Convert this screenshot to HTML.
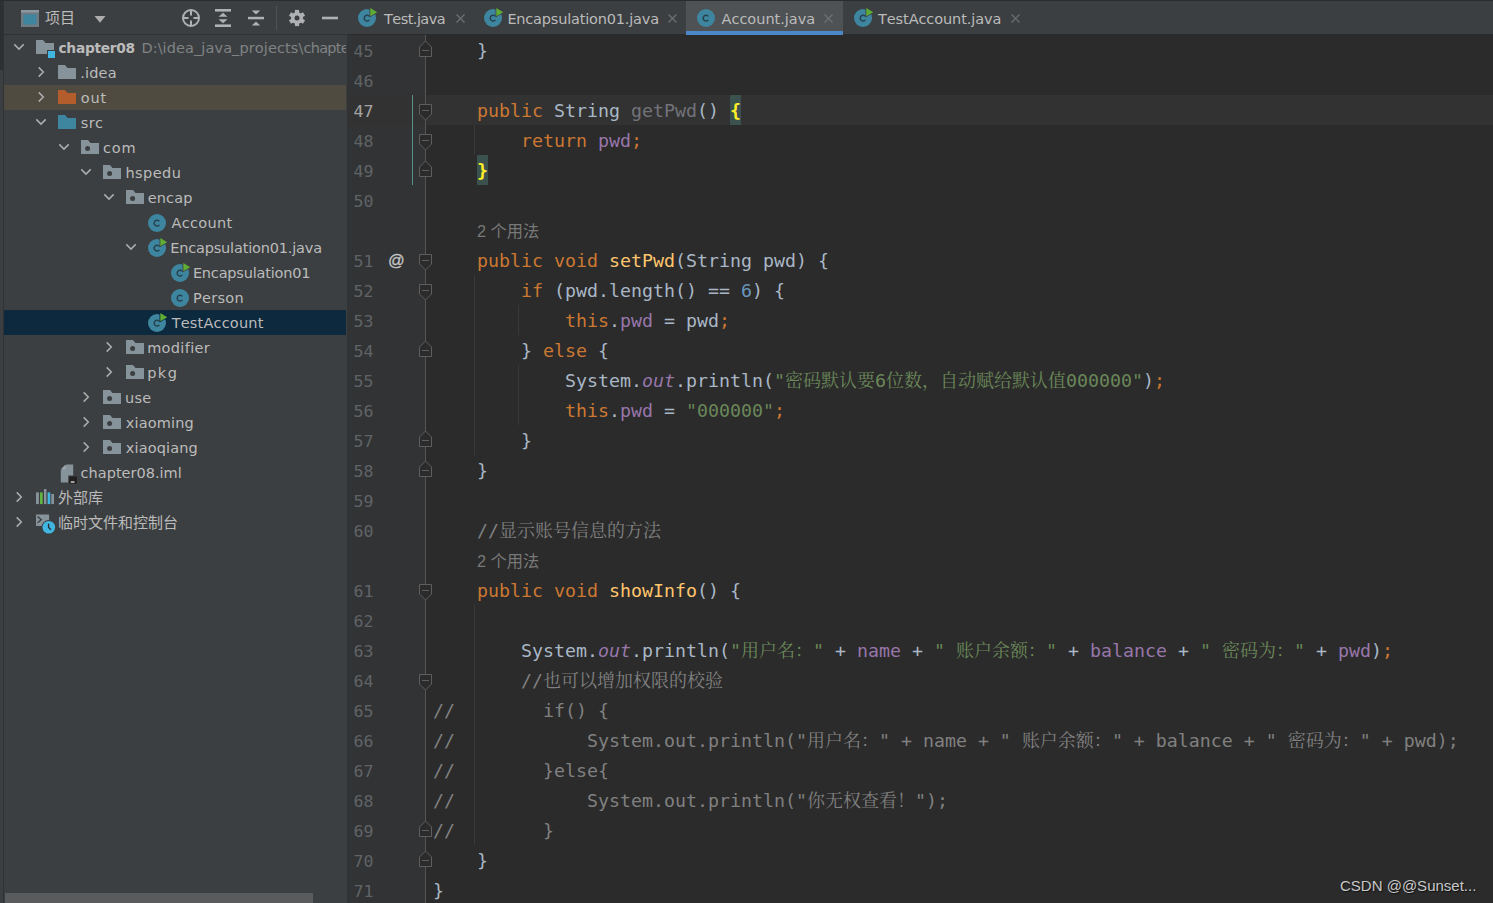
<!DOCTYPE html><html lang="zh"><head><meta charset="utf-8"><title>Account.java</title><style>
*{box-sizing:border-box}
html,body{margin:0;padding:0}
body{width:1493px;height:903px;overflow:hidden;background:#2b2b2b;position:relative;font-family:"Liberation Sans","Noto Sans CJK SC",sans-serif;font-size:15px;color:#bbbbbb}
.abs{position:absolute}
#strip{left:0;top:0;width:3px;height:903px;background:#3c3f41}
#strip i{position:absolute;left:0;top:0;width:4px;height:70px;background:#2d2f30}
#stripline{left:3px;top:0;width:1px;height:903px;background:#2f3132}
#panel{left:4px;top:0;width:343px;height:903px;background:#3c3f41;overflow:hidden}
#topline{left:0;top:0;width:1493px;height:1px;background:#2b2b2b}
#hdrline{left:4px;top:34px;width:342px;height:1px;background:#2f3132}
.row{position:absolute;left:5px;width:342px;height:25px}
.row .t{font-kerning:none;position:absolute;top:1px;line-height:25px;white-space:nowrap;font-family:"DejaVu Sans","Noto Sans CJK SC",sans-serif;font-size:14.5px;letter-spacing:.55px;color:#bbbbbb}
.row svg{position:absolute}
.gray{color:#7f8385}
#tabs{left:347px;top:1px;width:1146px;height:33px;background:#3c3f41}
.tab{position:absolute;top:1px;height:33px}
.tab .t{position:absolute;top:0;line-height:34px;white-space:nowrap;font-size:15px;letter-spacing:.55px;color:#bbbbbb}
.tab svg{position:absolute}
#gutter{left:347px;top:35px;width:79px;height:868px;background:#313335}
#foldline{left:425px;top:35px;width:1px;height:868px;background:#555555}
.ln{position:absolute;left:353.5px;height:30px;line-height:33.5px;font-family:"DejaVu Sans Mono","Liberation Mono","Noto Serif CJK SC",monospace;font-size:16.6px;color:#606366;white-space:pre}
.cl{position:absolute;left:433px;height:30px;line-height:32px;font-family:"DejaVu Sans Mono","Liberation Mono","Noto Serif CJK SC",monospace;font-size:18.27px;color:#a9b7c6;white-space:pre}
.cl .z,.z{font-family:"Noto Serif CJK SC",serif;font-size:18px;line-height:0}
.k{color:#cc7832}.m{color:#ffc66d}.f{color:#9876aa}.n{color:#6897bb}.s{color:#6a8759}.c{color:#808080}.u{color:#72737a}
.sf{color:#9876aa;font-style:italic}
.br{color:#ffef28;background:#3b514d;font-weight:bold;display:inline-block;height:30px;line-height:32px;vertical-align:top}
.hint{position:absolute;left:477px;height:30px;line-height:30px;font-size:16.25px;color:#787878;white-space:pre;letter-spacing:0}
.ig{position:absolute;width:1px;background:#393939}
</style></head><body>
<div class="abs" id="tabs"></div>
<div class="abs" id="gutter"></div>
<div class="abs" style="left:347px;top:95px;width:1146px;height:30px;background:#323232"></div>
<div class="abs" id="foldline"></div>
<div class="abs" style="left:412px;top:95px;width:1.3px;height:90px;background:#5a8f85"></div>
<div class="abs" id="strip"><i></i></div><div class="abs" id="stripline"></div>
<div class="abs" id="panel"></div>
<div class="abs" id="hdrline"></div>
<svg class="abs" style="left:0;top:0" width="347" height="35" viewBox="0 0 347 35">
<rect x="21" y="10" width="18" height="17" fill="#6e7b83"/><rect x="21" y="10" width="18" height="2.5" fill="#8c98a0"/>
<rect x="23.5" y="14.5" width="13" height="10" fill="#3e86a0"/>
<path d="M94.5 16 H105.5 L100 22.7 Z" fill="#adadad"/>
<g fill="none" stroke="#afb1b3" stroke-width="2">
<circle cx="191" cy="18" r="8"/>
<path d="M191 10 V15.5 M191 20.5 V26 M183 18 H188.5 M193.5 18 H199"/>
</g>
<g fill="#afb1b3">
<rect x="215" y="9" width="16" height="2.6"/><rect x="215" y="24.4" width="16" height="2.6"/>
<path d="M223 12.8 L227.5 16.8 H218.5 Z"/><path d="M223 23.2 L227.5 19.2 H218.5 Z"/>
<rect x="248" y="16.8" width="16" height="2.5"/>
<path d="M256 14.6 L260.2 10.4 H251.8 Z"/><path d="M256 21.4 L260.2 25.6 H251.8 Z"/>
<rect x="322" y="16.7" width="16" height="2.6"/>
</g>
<rect x="276" y="6" width="1" height="24" fill="#515151"/>
<g transform="translate(297 18)">
<g fill="#afb1b3">
<circle r="6"/>
<rect x="-2.1" y="-8.1" width="4.2" height="4" transform="rotate(0)"/>
<rect x="-2.1" y="-8.1" width="4.2" height="4" transform="rotate(60)"/>
<rect x="-2.1" y="-8.1" width="4.2" height="4" transform="rotate(120)"/>
<rect x="-2.1" y="-8.1" width="4.2" height="4" transform="rotate(180)"/>
<rect x="-2.1" y="-8.1" width="4.2" height="4" transform="rotate(240)"/>
<rect x="-2.1" y="-8.1" width="4.2" height="4" transform="rotate(300)"/>
</g>
<circle r="2.5" fill="#3c3f41"/>
</g>
</svg>
<div class="abs" style="left:45px;top:1px;line-height:34px;font-size:15px;color:#bbbbbb;letter-spacing:0">项目</div>
<svg class="abs" style="left:11.9px;top:42.25px" width="14" height="10" viewBox="0 0 14 10"><path d="M2.3 2.4 L7 7.1 L11.7 2.4" fill="none" stroke="#adadad" stroke-width="1.5"/></svg>
<svg class="abs" style="left:36px;top:39.5px" width="18" height="14" viewBox="0 0 18 14"><path d="M0 0 H7 L9.5 3 H18 V14 H0 Z" fill="#87939a"/></svg>
<div class="abs" style="left:46.5px;top:49.5px;width:9px;height:9px;background:#3c3f41"></div>
<div class="abs" style="left:47.5px;top:50.5px;width:7.5px;height:7.5px;background:#40b6e0"></div>
<div class="row" style="top:35px;left:0;width:346px;overflow:hidden"><span class="t" style="left:58.5px;letter-spacing:0px"><b style="letter-spacing:-.28px;font-size:13.75px">chapter08</b><span class="gray" style="position:absolute;left:82.9px;top:0;letter-spacing:.094px">D:\idea_java_projects\<span style="letter-spacing:-.7px">chapter08</span></span></span></div>
<svg class="abs" style="left:36.3px;top:65px" width="10" height="14" viewBox="0 0 10 14"><path d="M2.7 2.4 L7.3 7 L2.7 11.6" fill="none" stroke="#adadad" stroke-width="1.5"/></svg>
<svg class="abs" style="left:58px;top:65px" width="18" height="14" viewBox="0 0 18 14"><path d="M0 0 H7 L9.5 3 H18 V14 H0 Z" fill="#87939a"/></svg>
<div class="row" style="top:60px;left:0;width:346px;overflow:hidden"><span class="t" style="left:80.15px;letter-spacing:0.205px">.idea</span></div>
<div class="abs" style="left:4px;top:85px;width:342px;height:25px;background:#4f4b41"></div>
<svg class="abs" style="left:36.3px;top:90px" width="10" height="14" viewBox="0 0 10 14"><path d="M2.7 2.4 L7.3 7 L2.7 11.6" fill="none" stroke="#adadad" stroke-width="1.5"/></svg>
<svg class="abs" style="left:58px;top:90px" width="18" height="14" viewBox="0 0 18 14"><path d="M0 0 H7 L9.5 3 H18 V14 H0 Z" fill="#b35c2c"/></svg>
<div class="row" style="top:85px;left:0;width:346px;overflow:hidden"><span class="t" style="left:80.7px;letter-spacing:0.9px">out</span></div>
<svg class="abs" style="left:34.4px;top:117.25px" width="14" height="10" viewBox="0 0 14 10"><path d="M2.3 2.4 L7 7.1 L11.7 2.4" fill="none" stroke="#adadad" stroke-width="1.5"/></svg>
<svg class="abs" style="left:58px;top:115px" width="18" height="14" viewBox="0 0 18 14"><path d="M0 0 H7 L9.5 3 H18 V14 H0 Z" fill="#3e86a0"/></svg>
<div class="row" style="top:110px;left:0;width:346px;overflow:hidden"><span class="t" style="left:80.71px;letter-spacing:0.449px">src</span></div>
<svg class="abs" style="left:56.9px;top:142.25px" width="14" height="10" viewBox="0 0 14 10"><path d="M2.3 2.4 L7 7.1 L11.7 2.4" fill="none" stroke="#adadad" stroke-width="1.5"/></svg>
<svg class="abs" style="left:81px;top:140px" width="18" height="14" viewBox="0 0 18 14"><path d="M0 0 H7 L9.5 3 H18 V14 H0 Z" fill="#87939a"/><circle cx="6.6" cy="8.6" r="2.5" fill="#3c3f41"/></svg>
<div class="row" style="top:135px;left:0;width:346px;overflow:hidden"><span class="t" style="left:103px;letter-spacing:0.832px">com</span></div>
<svg class="abs" style="left:79.4px;top:167.25px" width="14" height="10" viewBox="0 0 14 10"><path d="M2.3 2.4 L7 7.1 L11.7 2.4" fill="none" stroke="#adadad" stroke-width="1.5"/></svg>
<svg class="abs" style="left:103px;top:165px" width="18" height="14" viewBox="0 0 18 14"><path d="M0 0 H7 L9.5 3 H18 V14 H0 Z" fill="#87939a"/><circle cx="6.6" cy="8.6" r="2.5" fill="#3c3f41"/></svg>
<div class="row" style="top:160px;left:0;width:346px;overflow:hidden"><span class="t" style="left:125.48px;letter-spacing:0.434px">hspedu</span></div>
<svg class="abs" style="left:101.9px;top:192.25px" width="14" height="10" viewBox="0 0 14 10"><path d="M2.3 2.4 L7 7.1 L11.7 2.4" fill="none" stroke="#adadad" stroke-width="1.5"/></svg>
<svg class="abs" style="left:126px;top:190px" width="18" height="14" viewBox="0 0 18 14"><path d="M0 0 H7 L9.5 3 H18 V14 H0 Z" fill="#87939a"/><circle cx="6.6" cy="8.6" r="2.5" fill="#3c3f41"/></svg>
<div class="row" style="top:185px;left:0;width:346px;overflow:hidden"><span class="t" style="left:147.7px;letter-spacing:0.13px">encap</span></div>
<svg class="abs" style="left:148px;top:212px" width="20" height="20" viewBox="0 0 20 20"><circle cx="9" cy="11" r="9" fill="#3e86a0"/><path d="M11.4 9.4 A2.9 2.9 0 1 0 11.4 12.9" fill="none" stroke="#27414d" stroke-width="1.5"/></svg>
<div class="row" style="top:210px;left:0;width:346px;overflow:hidden"><span class="t" style="left:171.49px;letter-spacing:0.31px">Account</span></div>
<svg class="abs" style="left:124.4px;top:242.25px" width="14" height="10" viewBox="0 0 14 10"><path d="M2.3 2.4 L7 7.1 L11.7 2.4" fill="none" stroke="#adadad" stroke-width="1.5"/></svg>
<svg class="abs" style="left:148px;top:237px" width="20" height="20" viewBox="0 0 20 20"><circle cx="9" cy="11" r="9" fill="#3e86a0"/><path d="M11.4 9.4 A2.9 2.9 0 1 0 11.4 12.9" fill="none" stroke="#27414d" stroke-width="1.5"/><path d="M11.5 -0.3 L20.6 5.15 L11.5 10.5 Z" fill="#3c3f41"/><path d="M12.3 1.1 L19.2 5.15 L12.3 9.2 Z" fill="#5fad34"/></svg>
<div class="row" style="top:235px;left:0;width:346px;overflow:hidden"><span class="t" style="left:170.18px;letter-spacing:-0.176px">Encapsulation01.java</span></div>
<svg class="abs" style="left:171px;top:262px" width="20" height="20" viewBox="0 0 20 20"><circle cx="9" cy="11" r="9" fill="#3e86a0"/><path d="M11.4 9.4 A2.9 2.9 0 1 0 11.4 12.9" fill="none" stroke="#27414d" stroke-width="1.5"/><path d="M11.5 -0.3 L20.6 5.15 L11.5 10.5 Z" fill="#3c3f41"/><path d="M12.3 1.1 L19.2 5.15 L12.3 9.2 Z" fill="#5fad34"/></svg>
<div class="row" style="top:260px;left:0;width:346px;overflow:hidden"><span class="t" style="left:192.88px;letter-spacing:-0.188px">Encapsulation01</span></div>
<svg class="abs" style="left:171px;top:287px" width="20" height="20" viewBox="0 0 20 20"><circle cx="9" cy="11" r="9" fill="#3e86a0"/><path d="M11.4 9.4 A2.9 2.9 0 1 0 11.4 12.9" fill="none" stroke="#27414d" stroke-width="1.5"/></svg>
<div class="row" style="top:285px;left:0;width:346px;overflow:hidden"><span class="t" style="left:192.88px;letter-spacing:0.323px">Person</span></div>
<div class="abs" style="left:4px;top:310px;width:342px;height:25px;background:#0d293e"></div>
<svg class="abs" style="left:148px;top:312px" width="20" height="20" viewBox="0 0 20 20"><circle cx="9" cy="11" r="9" fill="#3e86a0"/><path d="M11.4 9.4 A2.9 2.9 0 1 0 11.4 12.9" fill="none" stroke="#27414d" stroke-width="1.5"/><path d="M11.5 -0.3 L20.6 5.15 L11.5 10.5 Z" fill="#0d293e"/><path d="M12.3 1.1 L19.2 5.15 L12.3 9.2 Z" fill="#5fad34"/></svg>
<div class="row" style="top:310px;left:0;width:346px;overflow:hidden"><span class="t" style="left:171.64px;letter-spacing:0.189px">TestAccount</span></div>
<svg class="abs" style="left:103.8px;top:340px" width="10" height="14" viewBox="0 0 10 14"><path d="M2.7 2.4 L7.3 7 L2.7 11.6" fill="none" stroke="#adadad" stroke-width="1.5"/></svg>
<svg class="abs" style="left:126px;top:340px" width="18" height="14" viewBox="0 0 18 14"><path d="M0 0 H7 L9.5 3 H18 V14 H0 Z" fill="#87939a"/><circle cx="6.6" cy="8.6" r="2.5" fill="#3c3f41"/></svg>
<div class="row" style="top:335px;left:0;width:346px;overflow:hidden"><span class="t" style="left:147.18px;letter-spacing:0.325px">modifier</span></div>
<svg class="abs" style="left:103.8px;top:365px" width="10" height="14" viewBox="0 0 10 14"><path d="M2.7 2.4 L7.3 7 L2.7 11.6" fill="none" stroke="#adadad" stroke-width="1.5"/></svg>
<svg class="abs" style="left:126px;top:365px" width="18" height="14" viewBox="0 0 18 14"><path d="M0 0 H7 L9.5 3 H18 V14 H0 Z" fill="#87939a"/><circle cx="6.6" cy="8.6" r="2.5" fill="#3c3f41"/></svg>
<div class="row" style="top:360px;left:0;width:346px;overflow:hidden"><span class="t" style="left:147.18px;letter-spacing:1.464px">pkg</span></div>
<svg class="abs" style="left:81.3px;top:390px" width="10" height="14" viewBox="0 0 10 14"><path d="M2.7 2.4 L7.3 7 L2.7 11.6" fill="none" stroke="#adadad" stroke-width="1.5"/></svg>
<svg class="abs" style="left:103px;top:390px" width="18" height="14" viewBox="0 0 18 14"><path d="M0 0 H7 L9.5 3 H18 V14 H0 Z" fill="#87939a"/><circle cx="6.6" cy="8.6" r="2.5" fill="#3c3f41"/></svg>
<div class="row" style="top:385px;left:0;width:346px;overflow:hidden"><span class="t" style="left:125.07px;letter-spacing:0.269px">use</span></div>
<svg class="abs" style="left:81.3px;top:415px" width="10" height="14" viewBox="0 0 10 14"><path d="M2.7 2.4 L7.3 7 L2.7 11.6" fill="none" stroke="#adadad" stroke-width="1.5"/></svg>
<svg class="abs" style="left:103px;top:415px" width="18" height="14" viewBox="0 0 18 14"><path d="M0 0 H7 L9.5 3 H18 V14 H0 Z" fill="#87939a"/><circle cx="6.6" cy="8.6" r="2.5" fill="#3c3f41"/></svg>
<div class="row" style="top:410px;left:0;width:346px;overflow:hidden"><span class="t" style="left:125.78px;letter-spacing:0.16px">xiaoming</span></div>
<svg class="abs" style="left:81.3px;top:440px" width="10" height="14" viewBox="0 0 10 14"><path d="M2.7 2.4 L7.3 7 L2.7 11.6" fill="none" stroke="#adadad" stroke-width="1.5"/></svg>
<svg class="abs" style="left:103px;top:440px" width="18" height="14" viewBox="0 0 18 14"><path d="M0 0 H7 L9.5 3 H18 V14 H0 Z" fill="#87939a"/><circle cx="6.6" cy="8.6" r="2.5" fill="#3c3f41"/></svg>
<div class="row" style="top:435px;left:0;width:346px;overflow:hidden"><span class="t" style="left:125.78px;letter-spacing:0.144px">xiaoqiang</span></div>
<svg class="abs" style="left:58px;top:462.5px" width="22" height="22" viewBox="0 0 22 22"><path d="M8.6 1.5 H15.2 V19.5 H2.8 V7.3 Z" fill="#87939a"/><path d="M7.6 1.5 V6.3 H2.8 Z" fill="#9aa7b0"/><rect x="10.2" y="12.5" width="9.8" height="9" fill="#3c3f41"/><rect x="11.2" y="13.5" width="7.8" height="7.1" fill="#231f20"/><rect x="12.8" y="18.2" width="3.7" height="1.6" fill="#c4c4c4"/></svg>
<div class="row" style="top:460px;left:0;width:346px;overflow:hidden"><span class="t" style="left:80.6px;letter-spacing:0.008px">chapter08.iml</span></div>
<svg class="abs" style="left:13.8px;top:490px" width="10" height="14" viewBox="0 0 10 14"><path d="M2.7 2.4 L7.3 7 L2.7 11.6" fill="none" stroke="#adadad" stroke-width="1.5"/></svg>
<svg class="abs" style="left:36px;top:488px" width="20" height="18" viewBox="0 0 20 18"><g fill="#87939a"><rect x="0" y="4.4" width="2.9" height="11.7"/><rect x="8" y="1" width="2.4" height="15.1"/><rect x="15.3" y="6" width="2.7" height="10.1"/></g><rect x="4" y="4.4" width="2.7" height="11.7" fill="#62b543"/><rect x="11.6" y="4.4" width="2.7" height="11.7" fill="#40b6e0"/></svg>
<div class="row" style="top:485px;left:0;width:346px;overflow:hidden"><span class="t" style="left:58px;letter-spacing:0px"><span style="font-size:15px">外部库</span></span></div>
<svg class="abs" style="left:13.8px;top:515px" width="10" height="14" viewBox="0 0 10 14"><path d="M2.7 2.4 L7.3 7 L2.7 11.6" fill="none" stroke="#adadad" stroke-width="1.5"/></svg>
<svg class="abs" style="left:36px;top:512.5px" width="22" height="22" viewBox="0 0 22 22"><rect x="0" y="1.5" width="13.1" height="11.5" fill="#87939a"/><path d="M1.6 3.5 L5.3 6.7 L1.6 9.7" fill="none" stroke="#3c3f41" stroke-width="1.4"/><circle cx="12.8" cy="14.3" r="7.3" fill="#3c3f41"/><circle cx="12.8" cy="14.3" r="6.3" fill="#40b6e0"/><path d="M12.6 10.8 V14.4 L15 16.8" fill="none" stroke="#26323a" stroke-width="1.4"/></svg>
<div class="row" style="top:510px;left:0;width:346px;overflow:hidden"><span class="t" style="left:58px;letter-spacing:0px"><span style="font-size:15px">临时文件和控制台</span></span></div>
<div class="abs" style="left:5px;top:893px;width:308px;height:10px;background:#595b5d"></div>
<div class="abs" style="left:347px;top:1px;width:126px;height:33px;background:#3c3f41"></div>
<svg class="abs" style="left:358px;top:6.8px" width="20" height="20" viewBox="0 0 20 20"><circle cx="9" cy="11" r="9" fill="#3e86a0"/><path d="M11.4 9.4 A2.9 2.9 0 1 0 11.4 12.9" fill="none" stroke="#27414d" stroke-width="1.5"/><path d="M11.5 -0.3 L20.6 5.15 L11.5 10.5 Z" fill="#3c3f41"/><path d="M12.3 1.1 L19.2 5.15 L12.3 9.2 Z" fill="#5fad34"/></svg>
<div class="abs tabt" style="font-kerning:none;left:384.04px;top:2px;line-height:34px;font-family:&quot;DejaVu Sans&quot;,&quot;Noto Sans CJK SC&quot;,sans-serif;font-size:14.5px;letter-spacing:-0.554px;white-space:nowrap;color:#bbbbbb">Test.java</div>
<svg class="abs" style="left:455.7px;top:13.8px" width="9" height="9" viewBox="0 0 9 9"><path d="M0.5 0.5 L8.5 8.5 M8.5 0.5 L0.5 8.5" stroke="#6e7173" stroke-width="1.2" fill="none"/></svg>
<div class="abs" style="left:473px;top:1px;width:213px;height:33px;background:#3c3f41"></div>
<svg class="abs" style="left:484px;top:6.8px" width="20" height="20" viewBox="0 0 20 20"><circle cx="9" cy="11" r="9" fill="#3e86a0"/><path d="M11.4 9.4 A2.9 2.9 0 1 0 11.4 12.9" fill="none" stroke="#27414d" stroke-width="1.5"/><path d="M11.5 -0.3 L20.6 5.15 L11.5 10.5 Z" fill="#3c3f41"/><path d="M12.3 1.1 L19.2 5.15 L12.3 9.2 Z" fill="#5fad34"/></svg>
<div class="abs tabt" style="font-kerning:none;left:507.38px;top:2px;line-height:34px;font-family:&quot;DejaVu Sans&quot;,&quot;Noto Sans CJK SC&quot;,sans-serif;font-size:14.5px;letter-spacing:-0.192px;white-space:nowrap;color:#bbbbbb">Encapsulation01.java</div>
<svg class="abs" style="left:667.8px;top:13.8px" width="9" height="9" viewBox="0 0 9 9"><path d="M0.5 0.5 L8.5 8.5 M8.5 0.5 L0.5 8.5" stroke="#6e7173" stroke-width="1.2" fill="none"/></svg>
<div class="abs" style="left:686px;top:1px;width:157px;height:33px;background:#4e5254"></div>
<div class="abs" style="left:686px;top:31px;width:157px;height:3.5px;background:#4a88c7"></div>
<svg class="abs" style="left:697px;top:6.8px" width="20" height="20" viewBox="0 0 20 20"><circle cx="9" cy="11" r="9" fill="#3e86a0"/><path d="M11.4 9.4 A2.9 2.9 0 1 0 11.4 12.9" fill="none" stroke="#27414d" stroke-width="1.5"/></svg>
<div class="abs tabt" style="font-kerning:none;left:721.59px;top:2px;line-height:34px;font-family:&quot;DejaVu Sans&quot;,&quot;Noto Sans CJK SC&quot;,sans-serif;font-size:14.5px;letter-spacing:-0.024px;white-space:nowrap;color:#bbbbbb">Account.java</div>
<svg class="abs" style="left:824px;top:13.8px" width="9" height="9" viewBox="0 0 9 9"><path d="M0.5 0.5 L8.5 8.5 M8.5 0.5 L0.5 8.5" stroke="#6e7173" stroke-width="1.2" fill="none"/></svg>
<div class="abs" style="left:843px;top:1px;width:188px;height:33px;background:#3c3f41"></div>
<svg class="abs" style="left:854px;top:6.8px" width="20" height="20" viewBox="0 0 20 20"><circle cx="9" cy="11" r="9" fill="#3e86a0"/><path d="M11.4 9.4 A2.9 2.9 0 1 0 11.4 12.9" fill="none" stroke="#27414d" stroke-width="1.5"/><path d="M11.5 -0.3 L20.6 5.15 L11.5 10.5 Z" fill="#3c3f41"/><path d="M12.3 1.1 L19.2 5.15 L12.3 9.2 Z" fill="#5fad34"/></svg>
<div class="abs tabt" style="font-kerning:none;left:878.04px;top:2px;line-height:34px;font-family:&quot;DejaVu Sans&quot;,&quot;Noto Sans CJK SC&quot;,sans-serif;font-size:14.5px;letter-spacing:-0.102px;white-space:nowrap;color:#bbbbbb">TestAccount.java</div>
<svg class="abs" style="left:1011.2px;top:13.8px" width="9" height="9" viewBox="0 0 9 9"><path d="M0.5 0.5 L8.5 8.5 M8.5 0.5 L0.5 8.5" stroke="#6e7173" stroke-width="1.2" fill="none"/></svg>
<div class="ln" style="top:35px">45</div>
<div class="cl" style="top:35px">    }</div>
<div class="ln" style="top:65px">46</div>
<div class="ln" style="top:95px;color:#a4a3a3">47</div>
<div class="cl" style="top:95px">    <span class="k">public</span> String <span class="u">getPwd</span>() <span class="br">{</span></div>
<div class="ln" style="top:125px">48</div>
<div class="cl" style="top:125px">        <span class="k">return</span> <span class="f">pwd</span><span class="k">;</span></div>
<div class="ln" style="top:155px">49</div>
<div class="cl" style="top:155px">    <span class="br">}</span></div>
<div class="ln" style="top:185px">50</div>
<div class="hint" style="top:216px">2 个用法</div>
<div class="ln" style="top:245px">51</div>
<div class="cl" style="top:245px">    <span class="k">public void</span> <span class="m">setPwd</span>(String pwd) {</div>
<div class="ln" style="top:275px">52</div>
<div class="cl" style="top:275px">        <span class="k">if</span> (pwd.length() == <span class="n">6</span>) {</div>
<div class="ln" style="top:305px">53</div>
<div class="cl" style="top:305px">            <span class="k">this</span>.<span class="f">pwd</span> = pwd<span class="k">;</span></div>
<div class="ln" style="top:335px">54</div>
<div class="cl" style="top:335px">        } <span class="k">else</span> {</div>
<div class="ln" style="top:365px">55</div>
<div class="cl" style="top:365px">            System.<span class="sf">out</span>.println(<span class="s">"<span class="z">密码默认要</span>6<span class="z">位数，自动赋给默认值</span>000000"</span>)<span class="k">;</span></div>
<div class="ln" style="top:395px">56</div>
<div class="cl" style="top:395px">            <span class="k">this</span>.<span class="f">pwd</span> = <span class="s">"000000"</span><span class="k">;</span></div>
<div class="ln" style="top:425px">57</div>
<div class="cl" style="top:425px">        }</div>
<div class="ln" style="top:455px">58</div>
<div class="cl" style="top:455px">    }</div>
<div class="ln" style="top:485px">59</div>
<div class="ln" style="top:515px">60</div>
<div class="cl" style="top:515px">    <span class="c">//<span class="z">显示账号信息的方法</span></span></div>
<div class="hint" style="top:546px">2 个用法</div>
<div class="ln" style="top:575px">61</div>
<div class="cl" style="top:575px">    <span class="k">public void</span> <span class="m">showInfo</span>() {</div>
<div class="ln" style="top:605px">62</div>
<div class="ln" style="top:635px">63</div>
<div class="cl" style="top:635px">        System.<span class="sf">out</span>.println(<span class="s">"<span class="z">用户名：</span>"</span> + <span class="f">name</span> + <span class="s">" <span class="z">账户余额：</span>"</span> + <span class="f">balance</span> + <span class="s">" <span class="z">密码为：</span>"</span> + <span class="f">pwd</span>)<span class="k">;</span></div>
<div class="ln" style="top:665px">64</div>
<div class="cl" style="top:665px">        <span class="c">//<span class="z">也可以增加权限的校验</span></span></div>
<div class="ln" style="top:695px">65</div>
<div class="cl" style="top:695px"><span class="c">//        if() {</span></div>
<div class="ln" style="top:725px">66</div>
<div class="cl" style="top:725px"><span class="c">//            System.out.println("<span class="z">用户名：</span>" + name + " <span class="z">账户余额：</span>" + balance + " <span class="z">密码为：</span>" + pwd);</span></div>
<div class="ln" style="top:755px">67</div>
<div class="cl" style="top:755px"><span class="c">//        }else{</span></div>
<div class="ln" style="top:785px">68</div>
<div class="cl" style="top:785px"><span class="c">//            System.out.println("<span class="z">你无权查看！</span>");</span></div>
<div class="ln" style="top:815px">69</div>
<div class="cl" style="top:815px"><span class="c">//        }</span></div>
<div class="ln" style="top:845px">70</div>
<div class="cl" style="top:845px">    }</div>
<div class="ln" style="top:875px">71</div>
<div class="cl" style="top:875px">}</div>
<div class="ig" style="left:474.3px;top:125px;height:30px"></div>
<div class="ig" style="left:474.3px;top:275px;height:180px"></div>
<div class="ig" style="left:518.3px;top:305px;height:30px"></div>
<div class="ig" style="left:518.3px;top:365px;height:60px"></div>
<div class="ig" style="left:474.3px;top:605px;height:240px"></div>
<svg class="abs" style="left:418px;top:103px" width="15" height="18" viewBox="0 0 15 18"><path d="M1.5 1.5 H13.5 V11 L7.5 17 L1.5 11 Z" fill="#2b2b2b" stroke="#5e5e5e" stroke-width="1"/><path d="M4 7.5 H11" stroke="#5e5e5e" stroke-width="1"/></svg>
<svg class="abs" style="left:418px;top:133px" width="15" height="18" viewBox="0 0 15 18"><path d="M1.5 1.5 H13.5 V11 L7.5 17 L1.5 11 Z" fill="#2b2b2b" stroke="#5e5e5e" stroke-width="1"/><path d="M4 7.5 H11" stroke="#5e5e5e" stroke-width="1"/></svg>
<svg class="abs" style="left:418px;top:253px" width="15" height="18" viewBox="0 0 15 18"><path d="M1.5 1.5 H13.5 V11 L7.5 17 L1.5 11 Z" fill="#2b2b2b" stroke="#5e5e5e" stroke-width="1"/><path d="M4 7.5 H11" stroke="#5e5e5e" stroke-width="1"/></svg>
<svg class="abs" style="left:418px;top:283px" width="15" height="18" viewBox="0 0 15 18"><path d="M1.5 1.5 H13.5 V11 L7.5 17 L1.5 11 Z" fill="#2b2b2b" stroke="#5e5e5e" stroke-width="1"/><path d="M4 7.5 H11" stroke="#5e5e5e" stroke-width="1"/></svg>
<svg class="abs" style="left:418px;top:583px" width="15" height="18" viewBox="0 0 15 18"><path d="M1.5 1.5 H13.5 V11 L7.5 17 L1.5 11 Z" fill="#2b2b2b" stroke="#5e5e5e" stroke-width="1"/><path d="M4 7.5 H11" stroke="#5e5e5e" stroke-width="1"/></svg>
<svg class="abs" style="left:418px;top:673px" width="15" height="18" viewBox="0 0 15 18"><path d="M1.5 1.5 H13.5 V11 L7.5 17 L1.5 11 Z" fill="#2b2b2b" stroke="#5e5e5e" stroke-width="1"/><path d="M4 7.5 H11" stroke="#5e5e5e" stroke-width="1"/></svg>
<svg class="abs" style="left:418px;top:40px" width="15" height="18" viewBox="0 0 15 18"><path d="M1.5 16.5 H13.5 V7 L7.5 1 L1.5 7 Z" fill="#2b2b2b" stroke="#5e5e5e" stroke-width="1"/><path d="M4 10.5 H11" stroke="#5e5e5e" stroke-width="1"/></svg>
<svg class="abs" style="left:418px;top:160px" width="15" height="18" viewBox="0 0 15 18"><path d="M1.5 16.5 H13.5 V7 L7.5 1 L1.5 7 Z" fill="#2b2b2b" stroke="#5e5e5e" stroke-width="1"/><path d="M4 10.5 H11" stroke="#5e5e5e" stroke-width="1"/></svg>
<svg class="abs" style="left:418px;top:340px" width="15" height="18" viewBox="0 0 15 18"><path d="M1.5 16.5 H13.5 V7 L7.5 1 L1.5 7 Z" fill="#2b2b2b" stroke="#5e5e5e" stroke-width="1"/><path d="M4 10.5 H11" stroke="#5e5e5e" stroke-width="1"/></svg>
<svg class="abs" style="left:418px;top:430px" width="15" height="18" viewBox="0 0 15 18"><path d="M1.5 16.5 H13.5 V7 L7.5 1 L1.5 7 Z" fill="#2b2b2b" stroke="#5e5e5e" stroke-width="1"/><path d="M4 10.5 H11" stroke="#5e5e5e" stroke-width="1"/></svg>
<svg class="abs" style="left:418px;top:460px" width="15" height="18" viewBox="0 0 15 18"><path d="M1.5 16.5 H13.5 V7 L7.5 1 L1.5 7 Z" fill="#2b2b2b" stroke="#5e5e5e" stroke-width="1"/><path d="M4 10.5 H11" stroke="#5e5e5e" stroke-width="1"/></svg>
<svg class="abs" style="left:418px;top:820px" width="15" height="18" viewBox="0 0 15 18"><path d="M1.5 16.5 H13.5 V7 L7.5 1 L1.5 7 Z" fill="#2b2b2b" stroke="#5e5e5e" stroke-width="1"/><path d="M4 10.5 H11" stroke="#5e5e5e" stroke-width="1"/></svg>
<svg class="abs" style="left:418px;top:850px" width="15" height="18" viewBox="0 0 15 18"><path d="M1.5 16.5 H13.5 V7 L7.5 1 L1.5 7 Z" fill="#2b2b2b" stroke="#5e5e5e" stroke-width="1"/><path d="M4 10.5 H11" stroke="#5e5e5e" stroke-width="1"/></svg>
<div class="abs" style="left:388px;top:246px;line-height:28px;font-size:16.5px;color:#c4c4c4;-webkit-text-stroke:.3px #c4c4c4;font-family:&quot;Liberation Sans&quot;,&quot;Noto Sans CJK SC&quot;,sans-serif">@</div>
<div class="abs" style="left:1340px;top:876px;line-height:20px;font-size:15px;color:#c8c8c8;font-family:&quot;Liberation Sans&quot;,sans-serif;white-space:nowrap;text-shadow:1px 1px 1px #111">CSDN @@Sunset...</div>
<div class="abs" id="topline"></div>
</body></html>
